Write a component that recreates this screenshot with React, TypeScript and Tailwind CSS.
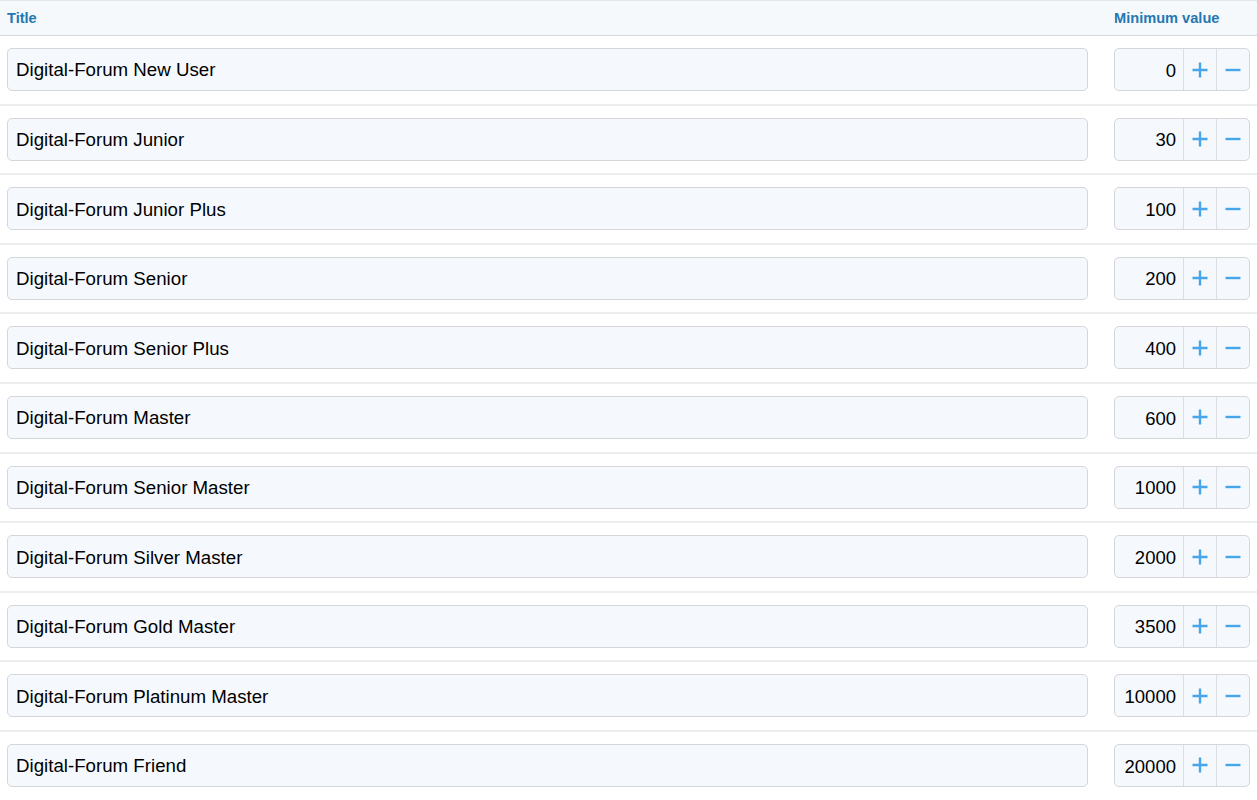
import React from "react";

const rows: [string, number][] = [
  ["Digital-Forum New User", 0],
  ["Digital-Forum Junior", 30],
  ["Digital-Forum Junior Plus", 100],
  ["Digital-Forum Senior", 200],
  ["Digital-Forum Senior Plus", 400],
  ["Digital-Forum Master", 600],
  ["Digital-Forum Senior Master", 1000],
  ["Digital-Forum Silver Master", 2000],
  ["Digital-Forum Gold Master", 3500],
  ["Digital-Forum Platinum Master", 10000],
  ["Digital-Forum Friend", 20000],
];

function Plus() {
  return (
    <svg width="18" height="18" viewBox="0 0 18 18">
      <path d="M9 1.5V16.5M1.5 9H16.5" stroke="#47a6ea" strokeWidth="2.4" />
    </svg>
  );
}
function Minus() {
  return (
    <svg width="18" height="18" viewBox="0 0 18 18">
      <path d="M1.5 9H16.5" stroke="#47a6ea" strokeWidth="2.4" />
    </svg>
  );
}

export default function App() {
  return (
    <div
      className="w-[1257px] h-[800px] overflow-hidden bg-white text-black"
      style={{ fontFamily: '"Liberation Sans", Arial, sans-serif' }}
    >
      <div className="h-[36px] flex items-center pt-[2px] bg-[#f5f9fc] border-t border-b border-t-[#e3e6e9] border-b-[#d6dade]">
        <div className="flex-1 pl-[7px] text-[14.6px] font-bold text-[#2577b1]">Title</div>
        <div className="w-[143px] pl-[0px] text-[14.6px] font-bold text-[#2577b1]">Minimum value</div>
      </div>
      {rows.map(([title, val]) => (
        <div
          key={title}
          className="flex items-center pt-[12px] pb-[12.6px] border-b-[2px] border-[#ebedef] pl-[7px] pr-[7px]"
        >
          <div className="flex-1 h-[43px] flex items-center pl-[8px] pt-[2px] bg-[#f5f9fd] border border-[#d4d6d8] rounded-[5px] text-[18.7px]">
            {title}
          </div>
          <div className="ml-[26px] w-[136px] h-[43px] flex bg-[#f5f9fd] border border-[#d4d6d8] rounded-[5px]">
            <div className="flex-1 flex items-center justify-end pr-[7px] pt-[2px] text-[18.5px]">{val}</div>
            <div className="w-[33px] flex items-center justify-center border-l border-[#dcdee0]">
              <Plus />
            </div>
            <div className="w-[33px] flex items-center justify-center border-l border-[#dcdee0]">
              <Minus />
            </div>
          </div>
        </div>
      ))}
    </div>
  );
}
